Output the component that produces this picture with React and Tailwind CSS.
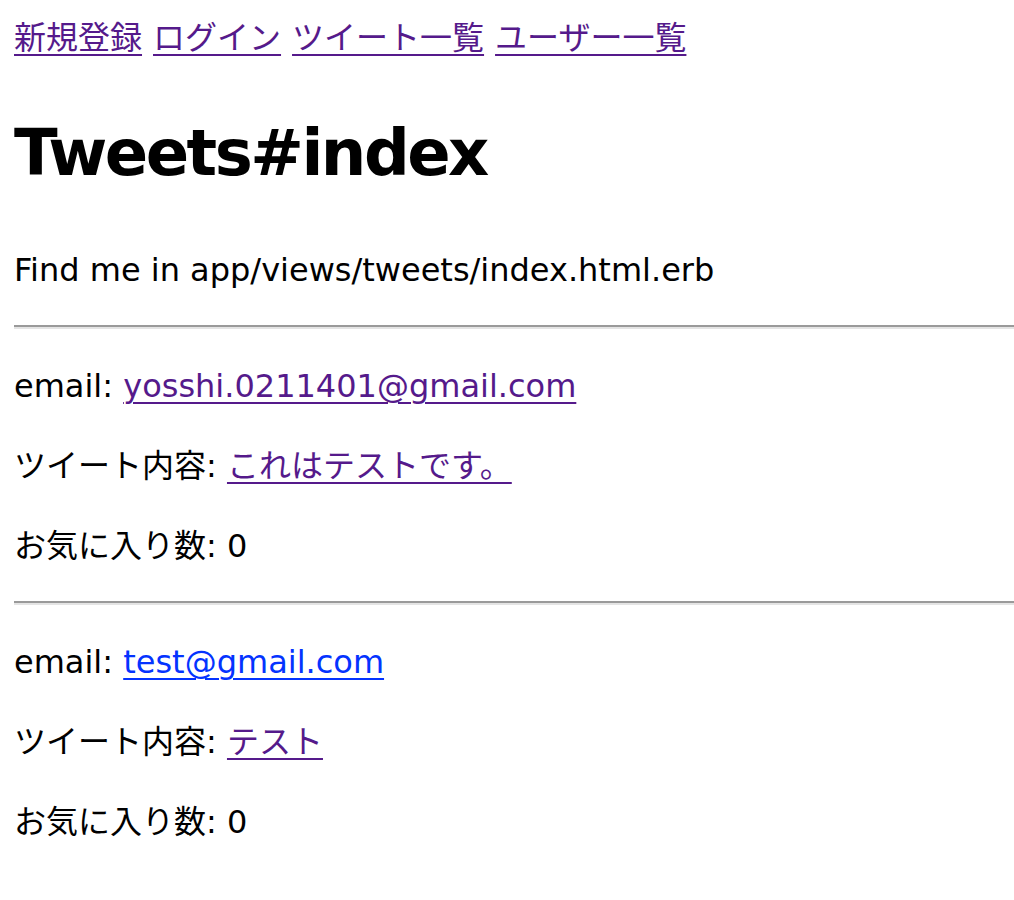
import React from 'react';

const tweets = [
  { email: 'yosshi.0211401@gmail.com', emailVisited: true, content: 'これはテストです。', favorites: 0 },
  { email: 'test@gmail.com', emailVisited: false, content: 'テスト', favorites: 0 },
];

const visited = 'text-[#551a8b] underline decoration-2 underline-offset-[5px]';
const unvisited = 'text-[#0433ff] underline decoration-2 underline-offset-[5px]';

export default function App() {
  return (
    <div
      className="bg-white text-black min-h-[900px] pl-[14px] pt-[14px] text-[32px] leading-[48px]"
      style={{ fontFamily: '"DejaVu Sans", "Noto Sans CJK JP", sans-serif' }}
    >
      {/* Header nav */}
      <div className="flex gap-[11px]" style={{ fontFamily: '"Liberation Sans", "Noto Sans CJK JP", sans-serif' }}>
        <a href="#" className={visited}>新規登録</a>
        <a href="#" className={visited}>ログイン</a>
        <a href="#" className={visited}>ツイート一覧</a>
        <a href="#" className={visited}>ユーザー一覧</a>
      </div>

      <h1 className="text-[64px] leading-[96px] font-bold mt-[43px] mb-[45px] tracking-[-2.5px]">Tweets#index</h1>
      <p>Find me in app/views/tweets/index.html.erb</p>

      {tweets.map((t, i) => (
        <div key={i}>
          <hr className="mt-[31px] mb-[33px] border-0 border-t-[2px] border-b-[2px] border-t-[#9a9a9a] border-b-[#e4e4e4]" />
          <div className="flex flex-col gap-[32px]">
            <p>
              email: <a href="#" className={t.emailVisited ? visited : unvisited}>{t.email}</a>
            </p>
            <p>
              ツイート内容: <a href="#" className={visited}>{t.content}</a>
            </p>
            <p>お気に入り数: {t.favorites}</p>
          </div>
        </div>
      ))}
    </div>
  );
}
